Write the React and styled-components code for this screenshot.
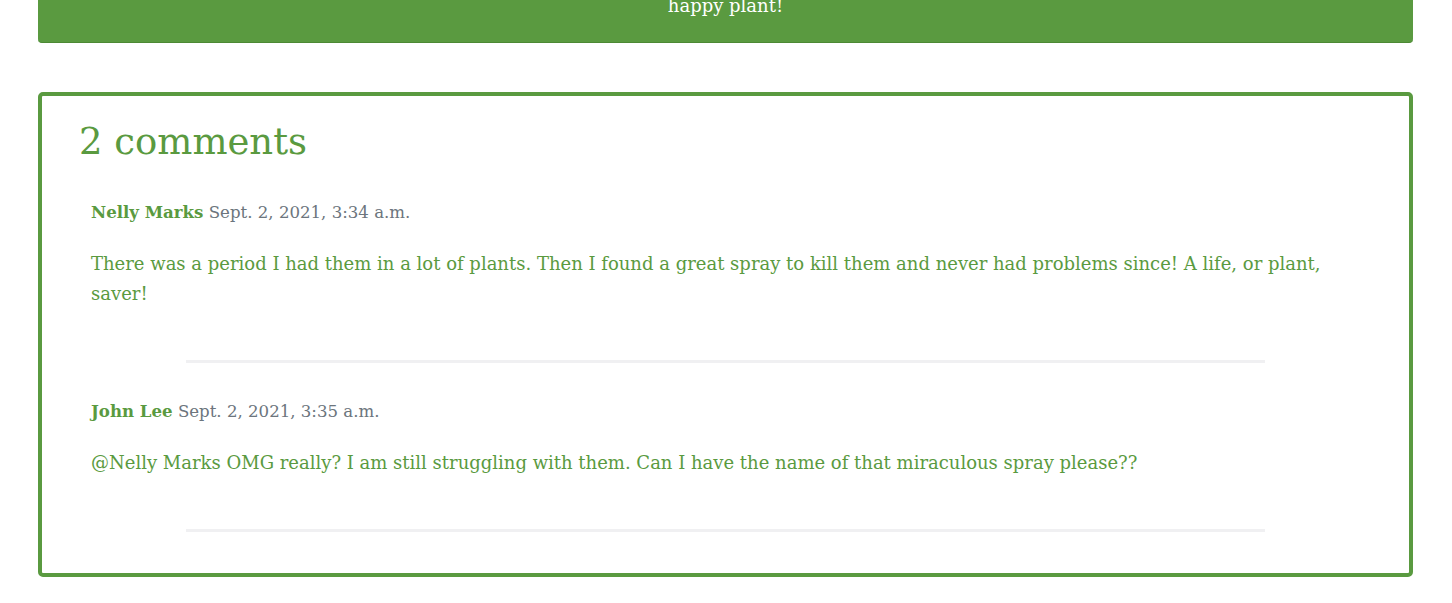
import React from "react";
import styled, { createGlobalStyle } from "styled-components";

const GREEN = "#5a9a40";

const GlobalStyle = createGlobalStyle`
  html, body {
    margin: 0;
    padding: 0;
    background: #fff;
    overflow: hidden;
  }
  body {
    font-family: "DejaVu Serif", "Liberation Serif", serif;
  }
`;

const Page = styled.div`
  padding: 0 39px 0 38px;
`;

const BuyBar = styled.div`
  margin-top: -14px;
  padding: 8px 0 24px;
  background: ${GREEN};
  border-bottom: 1px solid #4c8934;
  border-radius: 0 0 4px 4px;
  color: #fff;
  text-align: center;
  font-size: 18px;
  line-height: 24px;
`;

const CommentsCard = styled.section`
  margin-top: 49px;
  border: 4px solid ${GREEN};
  border-radius: 5px;
  padding: 22px 37px 41px;
`;

const Heading = styled.h2`
  margin: 0 0 31px;
  font-weight: 400;
  font-size: 37px;
  line-height: 48px;
  color: ${GREEN};
`;

const Comment = styled.article`
  padding: 0 12px;
`;

const Meta = styled.p`
  margin: 0 0 21px;
  font-size: 16.6px;
  line-height: 30px;
  color: #6c757d;
`;

const Author = styled.strong`
  color: ${GREEN};
  font-weight: 700;
`;

const Body = styled.p`
  margin: 0;
  font-size: 18px;
  line-height: 30px;
  color: ${GREEN};
`;

const Divider = styled.hr`
  width: 1079px;
  margin: ${(p) => (p.last ? "51px auto 0" : "51px auto 33px")};
  border: 0;
  border-top: 3px solid #f0f0f2;
`;

const comments = [
  {
    author: "Nelly Marks",
    date: "Sept. 2, 2021, 3:34 a.m.",
    text: "There was a period I had them in a lot of plants. Then I found a great spray to kill them and never had problems since! A life, or plant, saver!",
  },
  {
    author: "John Lee",
    date: "Sept. 2, 2021, 3:35 a.m.",
    text: "@Nelly Marks OMG really? I am still struggling with them. Can I have the name of that miraculous spray please??",
  },
];

export default function App() {
  return (
    <Page>
      <GlobalStyle />
      <BuyBar>happy plant!</BuyBar>
      <CommentsCard>
        <Heading>2 comments</Heading>
        {comments.map((c, i) => (
          <React.Fragment key={c.author}>
            <Comment>
              <Meta>
                <Author>{c.author}</Author> {c.date}
              </Meta>
              <Body>{c.text}</Body>
            </Comment>
            <Divider last={i === comments.length - 1} />
          </React.Fragment>
        ))}
      </CommentsCard>
    </Page>
  );
}
